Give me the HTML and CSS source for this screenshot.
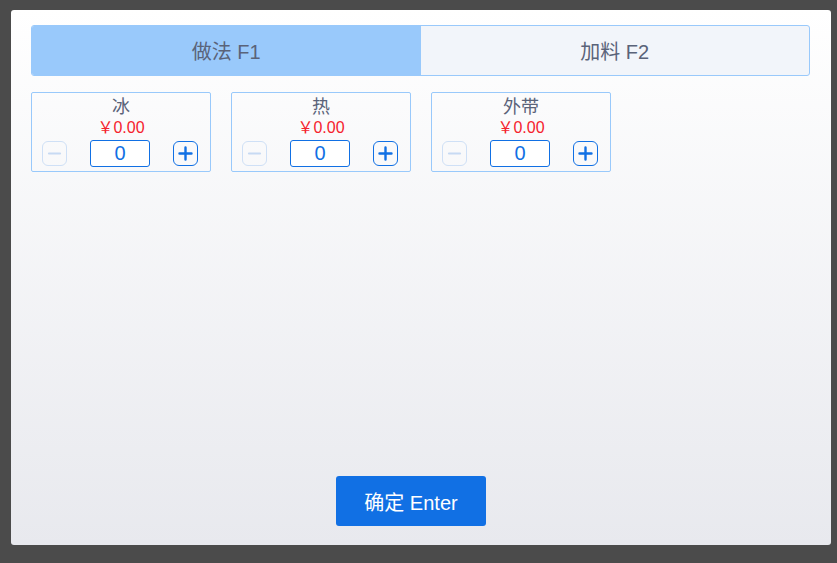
FILE: index.html
```html
<!DOCTYPE html>
<html lang="zh">
<head>
<meta charset="utf-8">
<link rel="stylesheet" href="styles.css">
</head>
<body>
<div class="panel">
  <div class="tabs">
    <div class="tab active">做法 F1</div>
    <div class="tab">加料 F2</div>
  </div>
  <div class="cards">
    <div class="card">
      <div class="name">冰</div>
      <div class="price">￥0.00</div>
      <div class="ctrl">
        <span class="btn minus"><svg width="15" height="15" viewBox="0 0 15 15"><path d="M2 7.5H13" stroke="currentColor" stroke-width="2.2" stroke-linecap="round"/></svg></span>
        <span class="num">0</span>
        <span class="btn plus"><svg width="15" height="15" viewBox="0 0 15 15"><path d="M1.5 7.5H13.5M7.5 1.5V13.5" stroke="currentColor" stroke-width="2.4" stroke-linecap="round"/></svg></span>
      </div>
    </div>
    <div class="card">
      <div class="name">热</div>
      <div class="price">￥0.00</div>
      <div class="ctrl">
        <span class="btn minus"><svg width="15" height="15" viewBox="0 0 15 15"><path d="M2 7.5H13" stroke="currentColor" stroke-width="2.2" stroke-linecap="round"/></svg></span>
        <span class="num">0</span>
        <span class="btn plus"><svg width="15" height="15" viewBox="0 0 15 15"><path d="M1.5 7.5H13.5M7.5 1.5V13.5" stroke="currentColor" stroke-width="2.4" stroke-linecap="round"/></svg></span>
      </div>
    </div>
    <div class="card">
      <div class="name">外带</div>
      <div class="price">￥0.00</div>
      <div class="ctrl">
        <span class="btn minus"><svg width="15" height="15" viewBox="0 0 15 15"><path d="M2 7.5H13" stroke="currentColor" stroke-width="2.2" stroke-linecap="round"/></svg></span>
        <span class="num">0</span>
        <span class="btn plus"><svg width="15" height="15" viewBox="0 0 15 15"><path d="M1.5 7.5H13.5M7.5 1.5V13.5" stroke="currentColor" stroke-width="2.4" stroke-linecap="round"/></svg></span>
      </div>
    </div>
  </div>
  <div class="footer">
    <button class="confirm">确定 Enter</button>
  </div>
</div>
</body>
</html>
```
FILE: styles.css
```css
html, body {
  margin: 0;
  padding: 0;
  background: #4b4b4b;
  font-family: "Liberation Sans", "Noto Sans CJK SC", sans-serif;
}
body {
  padding: 10px 6px 18px 11px;
  height: 563px;
  box-sizing: border-box;
}
.panel {
  width: 820px;
  height: 535px;
  box-sizing: border-box;
  padding: 15px 20px 19px 20px;
  border-radius: 3px;
  background: linear-gradient(#ffffff, #e8e9ee);
  display: flex;
  flex-direction: column;
}
.tabs {
  display: flex;
  height: 51px;
  width: 779px;
  border: 1px solid #99c9fb;
  border-radius: 3px;
  box-sizing: border-box;
  overflow: hidden;
  background: #f2f5fa;
}
.tab {
  flex: 1;
  display: flex;
  align-items: center;
  justify-content: center;
  font-size: 20px;
  color: #5a6379;
}
.tab.active {
  background: #99c9fb;
}
.cards {
  display: flex;
  gap: 20px;
  margin-top: 16px;
  flex: 1;
  align-items: flex-start;
}
.card {
  width: 180px;
  height: 80px;
  box-sizing: border-box;
  border: 1px solid #99c9fb;
  border-radius: 2px;
  padding-top: 3px;
  text-align: center;
}
.name {
  font-size: 18px;
  line-height: 22px;
  color: #5a6379;
}
.price {
  font-size: 16px;
  line-height: 19px;
  color: #f5222d;
}
.ctrl {
  display: flex;
  align-items: center;
  gap: 23px;
  padding-left: 10px;
  margin-top: 3px;
}
.btn {
  width: 25px;
  height: 25px;
  box-sizing: border-box;
  border-radius: 6px;
  border: 1px solid #1170e4;
  color: #1170e4;
  display: flex;
  align-items: center;
  justify-content: center;
}
.btn.minus {
  border-color: #cfe0f6;
  color: #c7daf3;
}
.num {
  width: 60px;
  height: 27px;
  box-sizing: border-box;
  border: 1px solid #1170e4;
  border-radius: 3px;
  color: #1170e4;
  font-size: 20px;
  line-height: 25px;
  text-align: center;
  background: #fff;
}
.footer {
  display: flex;
  justify-content: center;
  padding-right: 20px;
}
.confirm {
  width: 150px;
  height: 50px;
  border: none;
  border-radius: 3px;
  background: #1170e4;
  color: #fff;
  font-family: "Liberation Sans", "Noto Sans CJK SC", sans-serif;
  font-size: 20px;
  padding: 0;
}
```
